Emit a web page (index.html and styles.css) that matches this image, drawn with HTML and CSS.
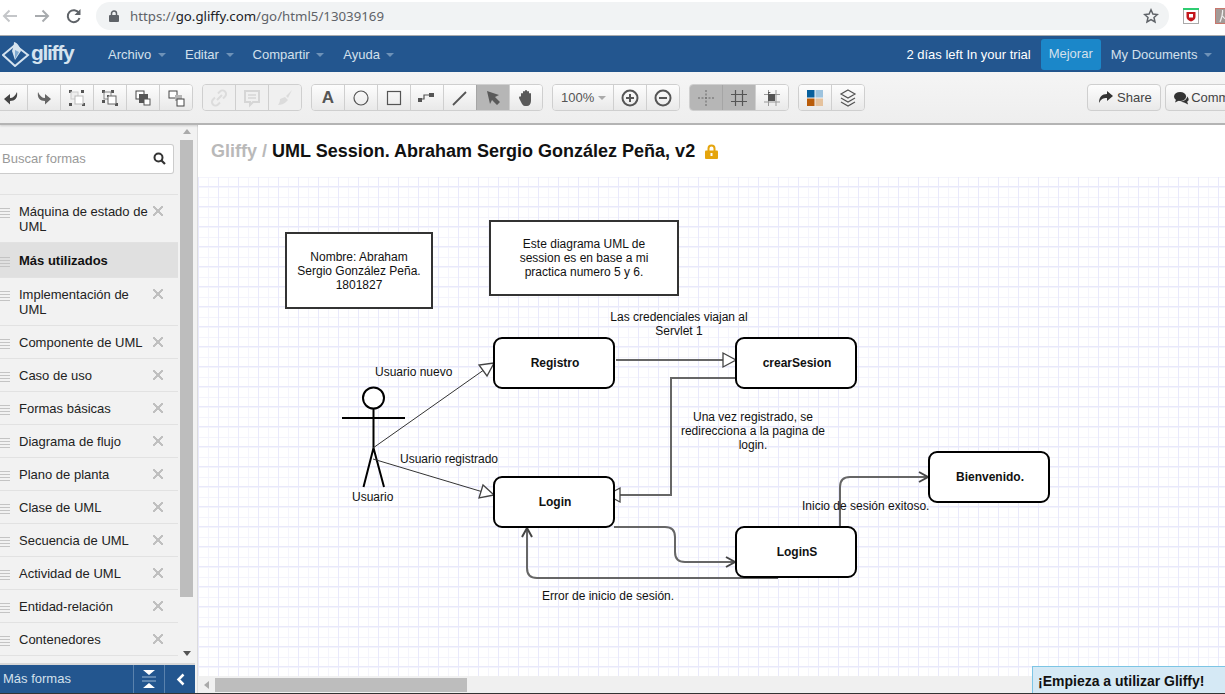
FILE: index.html
```html
<!DOCTYPE html>
<html>
<head>
  <title>Gliffy</title>
  <link rel="stylesheet" href="styles.css">
</head>
<body>
  <!-- Browser bar -->
  <div class="browser-bar">
    <svg class="browser-icon" width="18" height="18" viewBox="0 0 18 18"><path d="M16 9H3M8.500 3.500 3 9l5.500 5.500" fill="none" stroke="#c4c6c9" stroke-width="2"/></svg>
    <svg class="browser-icon" width="18" height="18" viewBox="0 0 18 18"><path d="M2 9h13M9.500 3.500 15 9l-5.500 5.500" fill="none" stroke="#a8abae" stroke-width="2"/></svg>
    <svg class="browser-icon" width="18" height="18" viewBox="0 0 18 18"><path d="M14.500 11a6 6 0 1 1-.6-5" fill="none" stroke="#5f6368" stroke-width="2"/><path d="M15.500 2v6h-6z" fill="#5f6368"/></svg>
    <div class="address-bar">
      <svg width="10" height="12" viewBox="0 0 10 12"><path d="M2.500 5V3.500a2.500 2.500 0 0 1 5 0V5" fill="none" stroke="#5f6368" stroke-width="1.500"/><rect y="5" width="10" height="7" rx="1" fill="#5f6368"/></svg>
      <span class="url">https://<b>go.gliffy.com</b>/go/html5/13039169</span>
      <svg class="star" width="16" height="16" viewBox="0 0 16 16"><path d="m8 1.800 1.900 4.200 4.500.5-3.400 3 1 4.500L8 11.700 4 14l1-4.500-3.400-3 4.500-.5z" fill="none" stroke="#5f6368" stroke-width="1.500"/></svg>
    </div>
    <svg class="ext-shield" width="16" height="16" viewBox="0 0 16 16"><rect x=".5" y=".5" width="15" height="15" fill="#fff" stroke="#aaa"/><rect width="16" height="2" fill="#2ecc71"/><path d="M3.500 4h9v5c0 2-2 3.500-4.500 4.500C5.500 12.500 3.500 11 3.500 9z" fill="#c4161c"/><rect x="6" y="6" width="4" height="3.500" fill="#fff"/></svg>
    <svg class="ext-pdf" width="16" height="16" viewBox="0 0 16 16"><rect x=".5" y=".5" width="15" height="15" fill="#a39a97" stroke="#c9766c"/><path d="M5 14C7 9 8 6 7.500 2M7.500 8c2 3 4 4 7 4" fill="none" stroke="#eee" stroke-width="1.200"/></svg>
  </div>

  <!-- App menu -->
  <nav class="menu-bar">
    <div class="logo">
      <svg width="28" height="26" viewBox="0 0 28 26"><path d="M1 14 13 4l13 10-13 11z" fill="none" stroke="#d5e3ef" stroke-width="2"/><path d="M12 1c4 1 6 5 7 9l-6 9-3-9c1-3 2-6 2-9z" fill="#d5e3ef"/><path d="m13 9 4 2-4 7z" fill="#7fa9d0"/></svg>
      <span>gliffy</span>
    </div>
    <a class="menu-item">Archivo <i class="caret"></i></a>
    <a class="menu-item">Editar <i class="caret"></i></a>
    <a class="menu-item">Compartir <i class="caret"></i></a>
    <a class="menu-item">Ayuda <i class="caret"></i></a>
    <div class="menu-right">
      <span class="trial">2 días left In your trial</span>
      <a class="upgrade">Mejorar</a>
      <a class="menu-item">My Documents <i class="caret"></i></a>
    </div>
  </nav>

  <!-- Toolbar -->
  <div class="toolbar">
    <div class="btn-group first-group">
      <button class="tool"><svg viewBox="0 0 20 20"><path d="M16 4c1 6-2 9-7 9v3.500L3 11l6-5v4c3 0 5-2 7-6z" fill="#444"/></svg></button>
      <button class="tool"><svg viewBox="0 0 20 20"><path d="M4 4c-1 6 2 9 7 9v3.500l6-5.500-6-5v4c-3 0-5-2-7-6z" fill="#666"/></svg></button>
      <button class="tool"><svg viewBox="0 0 20 20"><path d="M2 2h3v3H2zM14 2h3v3h-3zM2 15h3v3H2zM15 15h3v3h-3z" fill="#555"/><rect x="4" y="4" width="7" height="7" fill="#eee" stroke="#ccc"/><rect x="8" y="8" width="8" height="8" fill="#fff" stroke="#bbb"/></svg></button>
      <button class="tool"><svg viewBox="0 0 20 20"><path d="M2 2h3v3H2zM11 2h3v3h-3zM2 12h3v3H2zM15 15h3v3h-3zM7 7h2v2H7z" fill="#555"/><rect x="4" y="4" width="7" height="7" fill="none" stroke="#888"/><rect x="8" y="8" width="8" height="8" fill="#fff" stroke="#666"/></svg></button>
      <button class="tool"><svg viewBox="0 0 20 20"><rect x="3" y="3" width="8" height="8" fill="#fff" stroke="#444"/><rect x="6" y="6" width="9" height="9" fill="#555"/><rect x="11" y="11" width="6" height="6" fill="#fff" stroke="#555"/></svg></button>
      <button class="tool"><svg viewBox="0 0 20 20"><rect x="3" y="3" width="8" height="7" fill="#fff" stroke="#444"/><rect x="9" y="7" width="7" height="6" fill="#b5b5b5"/><rect x="11" y="11" width="7" height="7" fill="#fff" stroke="#444"/></svg></button>
    </div>
    <div class="btn-group disabled">
      <button class="tool"><svg viewBox="0 0 20 20"><path d="m8 12 5-5M9 5.500l2-2a3 3 0 0 1 5 5l-2 2M11 14.500l-2 2a3 3 0 0 1-5-5l2-2" fill="none" stroke="#dcdcdc" stroke-width="2"/></svg></button>
      <button class="tool"><svg viewBox="0 0 20 20"><path d="M3 3h14v11h-6l-3 3v-3H3z" fill="none" stroke="#d6d6d6" stroke-width="2"/><path d="M6 7h8M6 10h8" stroke="#d6d6d6" stroke-width="1.500"/></svg></button>
      <button class="tool"><svg viewBox="0 0 20 20"><path d="m17 2-6 6 2 2zM10 9 5 11c0 3-1 4-2 6 3 0 6-1 8-3l2-2z" fill="#dcdcdc"/></svg></button>
    </div>
    <div class="btn-group">
      <button class="tool tool-text">A</button>
      <button class="tool"><svg viewBox="0 0 20 20"><circle cx="10" cy="10" r="7" fill="none" stroke="#555" stroke-width="1.200"/></svg></button>
      <button class="tool"><svg viewBox="0 0 20 20"><rect x="3.500" y="3.500" width="13" height="13" fill="none" stroke="#555" stroke-width="1.200"/></svg></button>
      <button class="tool"><svg viewBox="0 0 20 20"><path d="M2 11h5V7h5" fill="none" stroke="#555" stroke-width="1.200"/><path d="M1 10h4v4H1zM12 5h5v4h-5z" fill="#555"/></svg></button>
      <button class="tool"><svg viewBox="0 0 20 20"><path d="M3 17 16 4" stroke="#555" stroke-width="1.800"/></svg></button>
      <button class="tool active"><svg viewBox="0 0 20 20"><path d="M4 3 16 7l-4 2 5 5-3 3-5-5-2 4z" fill="#5a5a5a"/></svg></button>
      <button class="tool"><svg viewBox="0 0 20 20"><path d="M5 9V6a1 1 0 0 1 2 0V4a1 1 0 0 1 2 0V3a1 1 0 0 1 2 0v1a1 1 0 0 1 2 0v2a1 1 0 0 1 2 0v7c0 3-2 5-4 5H9c-2 0-3-2-4-4L3 10c0-2 2-2 2-1z" fill="#5a5a5a"/></svg></button>
    </div>
    <div class="btn-group">
      <button class="tool zoom-select">100% <i class="caret caret-grey"></i></button>
      <button class="tool"><svg viewBox="0 0 20 20"><circle cx="10" cy="10" r="7.500" fill="none" stroke="#555" stroke-width="2"/><path d="M6 10h8M10 6v8" stroke="#555" stroke-width="2"/></svg></button>
      <button class="tool"><svg viewBox="0 0 20 20"><circle cx="10" cy="10" r="7.500" fill="none" stroke="#555" stroke-width="2"/><path d="M6 10h8" stroke="#555" stroke-width="2"/></svg></button>
    </div>
    <div class="btn-group">
      <button class="tool active"><svg viewBox="0 0 20 20"><path d="M2 10h16M10 2v16" stroke="#666" stroke-dasharray="2 1.500"/></svg></button>
      <button class="tool active"><svg viewBox="0 0 20 20"><path d="M2 6.500h16M2 13.500h16M6.500 2v16M13.500 2v16" stroke="#555" stroke-width="1.200"/></svg></button>
      <button class="tool"><svg viewBox="0 0 20 20"><path d="M2 6.500h16M2 14h16M6.500 2v16M14 2v16" stroke="#999"/><rect x="6" y="6" width="7" height="7" fill="#555"/><path d="M9 4h-3v2z" fill="#555"/></svg></button>
    </div>
    <div class="btn-group">
      <button class="tool"><svg viewBox="0 0 20 20"><rect x="2" y="2" width="7.500" height="7.500" fill="#075f9c"/><rect x="10.500" y="2" width="7.500" height="7.500" fill="#9dc3de"/><rect x="2" y="10.500" width="7.500" height="7.500" fill="#b95c0a"/><rect x="10.500" y="10.500" width="7.500" height="7.500" fill="#e5c29d"/></svg></button>
      <button class="tool"><svg viewBox="0 0 20 20"><path d="m10 2 7 4-7 4-7-4zM3 10l7 4 7-4M3 14l7 4 7-4" fill="none" stroke="#555" stroke-width="1.200"/></svg></button>
    </div>
    <div class="toolbar-right">
      <button class="text-btn share-btn"><svg width="15" height="13" viewBox="0 0 15 13"><path d="M9 0l6 5-6 5V7C5 7 3 8 1 12c0-6 3-9 8-9z" fill="#333"/></svg>Share</button>
      <button class="text-btn comment-btn"><svg width="17" height="14" viewBox="0 0 15 13"><ellipse cx="6" cy="5" rx="6" ry="4.500" fill="#333"/><path d="M2 8 1 11l4-2zM13 5c2 2 2 4 0 5l1 3-4-2-4-1c3 0 7-2 7-5z" fill="#333"/></svg>Comments</button>
    </div>
  </div>

  <div class="workspace">
    <!-- Shape library -->
    <aside class="sidebar">
      <div class="sidebar-body">
        <div class="shape-panel">
          <div class="search-box">
            <span>Buscar formas</span>
            <svg width="13" height="13" viewBox="0 0 13 13"><circle cx="5.500" cy="5.500" r="4" fill="none" stroke="#333" stroke-width="2"/><path d="m8.500 8.500 3.500 3.500" stroke="#333" stroke-width="2.200"/></svg>
          </div>
          <ul class="shape-list">
            <li class="shape-row"><i class="grip"></i><span>Máquina de estado de UML</span><i class="close"></i></li>
            <li class="shape-row selected"><i class="grip"></i><span>Más utilizados</span></li>
            <li class="shape-row"><i class="grip"></i><span>Implementación de UML</span><i class="close"></i></li>
            <li class="shape-row"><i class="grip"></i><span>Componente de UML</span><i class="close"></i></li>
            <li class="shape-row"><i class="grip"></i><span>Caso de uso</span><i class="close"></i></li>
            <li class="shape-row"><i class="grip"></i><span>Formas básicas</span><i class="close"></i></li>
            <li class="shape-row"><i class="grip"></i><span>Diagrama de flujo</span><i class="close"></i></li>
            <li class="shape-row"><i class="grip"></i><span>Plano de planta</span><i class="close"></i></li>
            <li class="shape-row"><i class="grip"></i><span>Clase de UML</span><i class="close"></i></li>
            <li class="shape-row"><i class="grip"></i><span>Secuencia de UML</span><i class="close"></i></li>
            <li class="shape-row"><i class="grip"></i><span>Actividad de UML</span><i class="close"></i></li>
            <li class="shape-row"><i class="grip"></i><span>Entidad-relación</span><i class="close"></i></li>
            <li class="shape-row"><i class="grip"></i><span>Contenedores</span><i class="close"></i></li>
          </ul>
        </div>
        <div class="side-scroll">
          <i class="arrow-up"></i>
          <div class="side-thumb"></div>
          <i class="arrow-down"></i>
        </div>
      </div>
      <div class="more-shapes">
        <span>Más formas</span>
        <div class="more-btn">
          <svg width="16" height="18" viewBox="0 0 16 18"><path d="M2 0h12L8 5zM2 18h12l-6-5z" fill="#fff"/><path d="M1 7h14M1 11h14" stroke="#9db8d4"/></svg>
        </div>
        <div class="more-btn collapse-btn">
          <svg width="9" height="13" viewBox="0 0 9 13"><path d="M7.500 1.500 2.500 6.500l5 5" fill="none" stroke="#fff" stroke-width="2.500"/></svg>
        </div>
      </div>
    </aside>

    <main class="editor">
      <div class="doc-title">
        <span class="brand">Gliffy / </span><span>UML Session. Abraham Sergio González Peña, v2</span>
        <svg width="13" height="15" viewBox="0 0 13 15"><path d="M3.500 7V4.500a3 3 0 0 1 6 0V7" fill="none" stroke="#e5a50d" stroke-width="2"/><rect y="6.500" width="13" height="8.500" rx="1" fill="#e5a50d"/><rect x="5.500" y="9" width="2" height="3" fill="#fff"/></svg>
      </div>

      <div class="canvas">
        <svg class="wires" width="1027" height="500" viewBox="198 177 1027 500">
          <!-- actor -->
          <g class="actor">
            <circle cx="373.500" cy="398" r="10.500"/>
            <path d="M373.500 408.500V448M342 418h63M373.500 448l-10 39M373.500 448l10.500 39"/>
          </g>
          <!-- thin lines with hollow heads -->
          <g class="thin">
            <path d="M373 448 488 367"/>
            <path d="M373 459 483 492"/>
            <path class="head" d="m494 363-15 2 8 11z"/>
            <path class="head" d="m494 495-11-10-4 13z"/>
          </g>
          <!-- grey connectors -->
          <g class="link">
            <path d="M616 360H723"/>
            <path d="M736 378H671V495H620"/>
            <path d="M614 527H665Q675 527 675 537V552Q675 562 685 562H735"/>
            <path d="M778 578H537Q527 578 527 568V529"/>
            <path d="M840 527V487Q840 477 850 477H928"/>
            <path class="head" d="M723 353v14l13-7z"/>
            <path class="head" d="M620 488v14l-13-7z"/>
            <path class="chevron" d="m726 557 9 5-9 5"/>
            <path class="chevron" d="m522 537 5-9 5 9"/>
            <path class="chevron" d="m919 472 9 5-9 5"/>
          </g>
        </svg>

        <div class="note note-name">Nombre: Abraham<br>Sergio González Peña.<br>1801827</div>
        <div class="note note-about">Este diagrama UML de<br>session es en base a mi<br>practica numero 5 y 6.</div>

        <div class="node node-registro">Registro</div>
        <div class="node node-crear">crearSesion</div>
        <div class="node node-login">Login</div>
        <div class="node node-logins">LoginS</div>
        <div class="node node-bienvenido">Bienvenido.</div>

        <div class="label lb-credenciales">Las credenciales viajan al<br>Servlet 1</div>
        <div class="label lb-nuevo">Usuario nuevo</div>
        <div class="label lb-registrado">Usuario registrado</div>
        <div class="label lb-usuario">Usuario</div>
        <div class="label lb-redirect">Una vez registrado, se<br>redirecciona a la pagina de<br>login.</div>
        <div class="label lb-exito">Inicio de sesión exitoso.</div>
        <div class="label lb-error">Error de inicio de sesión.</div>
      </div>

      <div class="h-scroll">
        <i class="arrow-left"></i>
        <div class="h-thumb"></div>
      </div>
      <div class="get-started">¡Empieza a utilizar Gliffy!</div>
    </main>
  </div>
</body>
</html>
```

FILE: styles.css
```css
* {
  box-sizing: border-box;
}

html, body {
  height: 100%;
}

body {
  margin: 0;
  overflow: hidden;
  display: flex;
  flex-direction: column;
  font-family: "Liberation Sans", Arial, sans-serif;
  background-color: #f2f2f2;
  border-bottom: 1px solid #333;
}

/* Browser bar */
.browser-bar {
  height: 36px;
  flex: none;
  display: flex;
  align-items: center;
  background-color: #fff;
  border-bottom: 1px solid #a9abae;
  padding: 0 0 3px 1px;
}

.browser-bar svg {
  flex: none;
}

.browser-icon {
  margin-right: 14px;
}

.address-bar {
  width: 1073px;
  height: 28px;
  flex: none;
  margin-left: -1px;
  padding: 0 10px 0 13px;
  display: flex;
  align-items: center;
  background-color: #f1f3f4;
  border-radius: 14px;
}

.url {
  margin-left: 11px;
  font-family: "Noto Sans", sans-serif;
  font-size: 13.250px;
  color: #5f6368;
}

.url b {
  font-weight: normal;
  color: #202124;
}

.star {
  margin-left: auto;
}

.ext-shield {
  margin-left: 14px;
}

.ext-pdf {
  margin-left: 16px;
}

/* Menu */
.menu-bar {
  height: 36px;
  flex: none;
  display: flex;
  align-items: center;
  padding-left: 2px;
  background-color: #23568f;
  font-size: 13px;
  color: #d3e0ec;
}

.logo {
  width: 106px;
  display: flex;
  align-items: center;
  gap: 1px;
}

.logo span {
  font-size: 21px;
  font-weight: bold;
  letter-spacing: -1.300px;
  color: #d5e3ef;
  line-height: 26px;
  margin-top: -2px;
}

.menu-item {
  margin-right: 19px;
  white-space: nowrap;
}

.caret {
  display: inline-block;
  width: 0;
  height: 0;
  margin-left: 3px;
  vertical-align: middle;
  border-left: 4px solid transparent;
  border-right: 4px solid transparent;
  border-top: 4px solid #6e92b8;
}

.menu-right {
  margin-left: auto;
  display: flex;
  align-items: center;
  height: 100%;
}

.menu-right .menu-item {
  margin-right: 13px;
}

.trial {
  color: #fff;
  margin-right: 10px;
}

.upgrade {
  width: 60px;
  height: 31px;
  margin-right: 10px;
  line-height: 30px;
  text-align: center;
  background-color: #1b87c9;
  border-radius: 3px;
}

/* Toolbar */
.toolbar {
  height: 53px;
  flex: none;
  position: relative;
  display: flex;
  align-items: flex-start;
  gap: 9px;
  padding-top: 12px;
  background: linear-gradient(#f5f5f5, #eeeeee);
  border-bottom: 2px solid #b4b4b4;
  box-shadow: 0 1px 2px rgba(0, 0, 0, 0.15);
}

.btn-group {
  display: flex;
  flex: none;
  height: 27px;
  border: 1px solid #cfcfcf;
  border-radius: 4px;
  overflow: hidden;
}

.first-group {
  margin-left: -6px;
}

.tool {
  width: 33px;
  height: 100%;
  padding: 0;
  display: flex;
  align-items: center;
  justify-content: center;
  background: linear-gradient(#fdfdfd, #e9e9e9);
  border: none;
  border-left: 1px solid #cfcfcf;
  font-family: inherit;
}

.tool:first-child {
  width: 32px;
  border-left: none;
}

.tool svg {
  width: 20px;
  height: 20px;
}

.tool.active {
  background: #b6b6b6;
  border-left-color: #a5a5a5;
}

.disabled .tool {
  background: #f0f0f0;
}

.tool-text {
  font-size: 17px;
  font-weight: bold;
  color: #555;
}

.tool.zoom-select {
  width: 60px;
  justify-content: flex-start;
  gap: 4px;
  padding-left: 8px;
  font-size: 13px;
  color: #555;
}

.caret-grey {
  margin-left: 0;
  border-top-color: #aaa;
}

.toolbar-right {
  margin-left: auto;
  margin-right: -30px;
  display: flex;
  gap: 4px;
}

.text-btn {
  height: 27px;
  display: flex;
  align-items: center;
  gap: 4px;
  padding: 0 0 0 10px;
  background: linear-gradient(#fdfdfd, #e9e9e9);
  border: 1px solid #cfcfcf;
  border-radius: 4px;
  font-family: inherit;
  font-size: 13px;
  color: #444;
}

.share-btn {
  width: 74px;
}

.comment-btn {
  width: 90px;
  gap: 2px;
  padding-left: 8px;
}

/* Workspace */
.workspace {
  flex: 1;
  min-height: 0;
  display: flex;
}

.sidebar {
  width: 198px;
  flex: none;
  display: flex;
  flex-direction: column;
  padding-right: 2px;
  background-color: #f2f2f2;
  border-right: 1px solid #dcdcdc;
}

.sidebar-body {
  flex: 1;
  min-height: 0;
  display: flex;
}

.shape-panel {
  width: 178px;
  flex: none;
  overflow: hidden;
}

.search-box {
  height: 30px;
  width: 174px;
  margin: 19px 0 20px;
  padding: 0 7px 2px 2px;
  display: flex;
  align-items: center;
  justify-content: space-between;
  background-color: #fff;
  border: 1px solid #ccc;
  border-left: none;
  border-radius: 0 3px 3px 0;
  font-size: 13px;
  color: #999;
}

.shape-list {
  list-style: none;
  margin: 0;
  padding: 0;
  border-top: 1px solid #e2e2e2;
}

.shape-row {
  display: flex;
  align-items: flex-start;
  padding: 9px 0 8px;
  line-height: 15px;
  font-size: 13px;
  color: #222;
  border-bottom: 1px solid #e2e2e2;
}

.shape-row span {
  width: 129px;
  flex: none;
  margin-left: 9px;
  margin-right: 5px;
}

.shape-row.selected {
  padding: 10px 0 9px;
  background-color: #e0e0e0;
  font-weight: bold;
  color: #111;
}

.grip {
  width: 10px;
  height: 10px;
  margin-top: 4px;
  flex: none;
  background: repeating-linear-gradient(#c4c4c4 0, #c4c4c4 1px, transparent 1px, transparent 3px);
}

.close {
  width: 10px;
  height: 10px;
  margin-top: 2px;
  flex: none;
  background:
    linear-gradient(45deg, transparent 42%, #c0c0c0 42%, #c0c0c0 58%, transparent 58%),
    linear-gradient(-45deg, transparent 42%, #c0c0c0 42%, #c0c0c0 58%, transparent 58%);
}

.side-scroll {
  width: 13px;
  margin-left: 2px;
  display: flex;
  flex-direction: column;
}

.arrow-up, .arrow-down {
  align-self: center;
  width: 0;
  height: 0;
  border-left: 4px solid transparent;
  border-right: 4px solid transparent;
}

.arrow-up {
  margin-top: 4px;
  border-bottom: 5px solid #aaa;
}

.arrow-down {
  margin-top: 54px;
  border-top: 5px solid #555;
}

.side-thumb {
  height: 457px;
  flex: none;
  margin-top: 6px;
  background-color: #bdbdbd;
}

.more-shapes {
  height: 30px;
  flex: none;
  display: flex;
  align-items: center;
  padding-left: 3px;
  background-color: #23568f;
  border-top: 2px solid #d8d8d8;
  font-size: 13px;
  color: #d3e0ec;
}

.more-shapes span {
  flex: 1;
  margin-top: -2px;
}

.more-btn {
  width: 31px;
  height: 100%;
  display: flex;
  align-items: center;
  justify-content: center;
  border-left: 1px solid #5a82ad;
}

/* Editor */
.editor {
  flex: 1;
  min-width: 0;
  position: relative;
  display: flex;
  flex-direction: column;
  background-color: #fff;
}

.doc-title {
  height: 52px;
  flex: none;
  display: flex;
  align-items: center;
  padding-left: 13px;
  white-space: pre;
  font-size: 18px;
  font-weight: bold;
  color: #111;
}

.doc-title .brand {
  color: #b9b9b9;
}

.doc-title svg {
  margin-left: 10px;
}

.canvas {
  flex: 1;
  min-height: 0;
  position: relative;
  overflow: hidden;
  background-color: #fff;
  background-image:
    linear-gradient(90deg, #e9e9fb 1px, transparent 1px),
    linear-gradient(#e9e9fb 1px, transparent 1px),
    linear-gradient(90deg, #f4f4fc 1px, transparent 1px),
    linear-gradient(#f4f4fc 1px, transparent 1px);
  background-size: 20px 20px, 20px 20px, 10px 10px, 10px 10px;
  background-position: 0 0, 0 9px, 0 0, 0 0;
}

.wires {
  position: absolute;
  left: 0;
  top: 0;
}

.actor path, .actor circle {
  fill: #fff;
  stroke: #000;
  stroke-width: 2;
}

.actor path {
  fill: none;
}

.thin {
  fill: none;
  stroke: #333;
  stroke-width: 1;
}

.link {
  fill: none;
  stroke: #666;
  stroke-width: 2;
}

.head {
  fill: #fff;
  stroke: #444;
  stroke-width: 1.300;
}

.chevron {
  stroke: #444;
  stroke-width: 2;
}

.note, .node, .label {
  position: absolute;
  font-size: 12px;
  line-height: 14px;
  color: #111;
  text-align: center;
}

.note, .node {
  display: flex;
  align-items: center;
  justify-content: center;
  background-color: #fff;
}

.note {
  border: 2px solid #333;
}

.note-name {
  left: 87px;
  top: 55px;
  width: 148px;
  height: 77px;
  padding-top: 1px;
}

.note-about {
  left: 291px;
  top: 43px;
  width: 190px;
  height: 76px;
}

.node {
  width: 122px;
  height: 52px;
  padding-left: 2px;
  border: 2px solid #000;
  border-radius: 9px;
  font-weight: bold;
}

.node-registro {
  left: 295px;
  top: 160px;
}

.node-crear {
  left: 537px;
  top: 160px;
}

.node-login {
  left: 295px;
  top: 299px;
}

.node-logins {
  left: 537px;
  top: 349px;
}

.node-bienvenido {
  left: 730px;
  top: 274px;
}

.label {
  white-space: nowrap;
}

.lb-credenciales {
  left: 381px;
  top: 133px;
  width: 200px;
}

.lb-nuevo {
  left: 177px;
  top: 188px;
}

.lb-registrado {
  left: 202px;
  top: 275px;
}

.lb-usuario {
  left: 154px;
  top: 313px;
}

.lb-redirect {
  left: 455px;
  top: 233px;
  width: 200px;
}

.lb-exito {
  left: 604px;
  top: 322px;
}

.lb-error {
  left: 344px;
  top: 412px;
}

/* Bottom scrollbar */
.h-scroll {
  height: 17px;
  flex: none;
  display: flex;
  align-items: center;
  background-color: #f0f0f0;
}

.arrow-left {
  width: 0;
  height: 0;
  margin-left: 6px;
  border-top: 4px solid transparent;
  border-bottom: 4px solid transparent;
  border-right: 5px solid #aaa;
}

.h-thumb {
  width: 252px;
  height: 14px;
  margin-left: 6px;
  background-color: #bdbdbd;
}

.get-started {
  position: absolute;
  right: 0;
  bottom: 0;
  width: 193px;
  height: 27px;
  padding-left: 5px;
  line-height: 29px;
  background-color: #d5e9f5;
  border-top: 1px solid #7cc5e5;
  border-left: 1px solid #7cc5e5;
  font-size: 14px;
  font-weight: bold;
  color: #111;
}
```
